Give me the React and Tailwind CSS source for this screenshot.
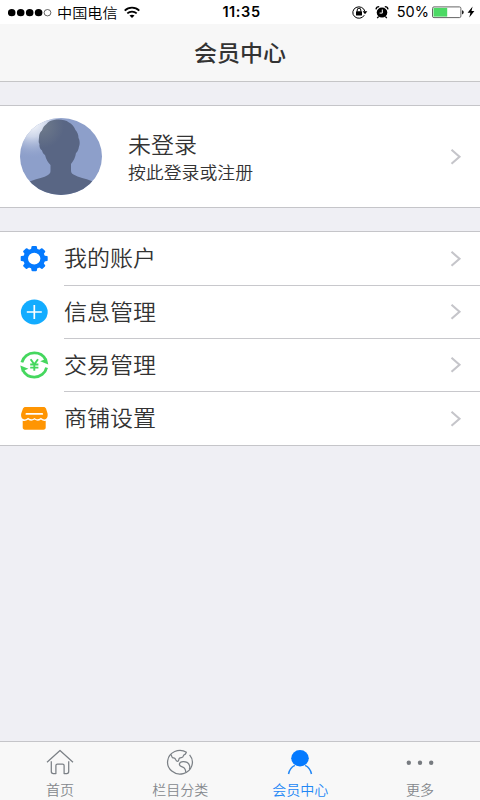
import React from 'react'

const Label = ({ children, className = '' }) => (
  <span className={`inline-block whitespace-nowrap scale-x-[1.07] ${className}`}>{children}</span>
)

const WifiIcon = () => (
  <svg width="16" height="13" viewBox="0 0 16 13" fill="none" stroke="#000" strokeWidth="1.8">
    <path d="M.7 4.6C4.8.7 11.2.7 15.3 4.6" />
    <path d="M3.3 7.4c2.7-2.5 6.7-2.5 9.4 0" />
    <path d="M8 12 5.5 9.6c1.4-1.3 3.6-1.3 5 0z" fill="#000" stroke="none" />
  </svg>
)

const LockIcon = () => (
  <svg width="16" height="14" viewBox="0 0 16 14" fill="none" stroke="#000">
    <path d="M12.3 10.2A6.1 5.7 0 1 1 12.9 6.5" strokeWidth="1" />
    <path d="M10.6 6.3h4.7L13 9.2z" fill="#000" stroke="none" />
    <rect x="4" y="6.3" width="6" height="4.2" rx=".5" fill="#000" stroke="none" />
    <path d="M5.2 6.6V5a1.8 1.8 0 0 1 3.6 0v1.6" strokeWidth="1" />
  </svg>
)

const AlarmIcon = () => (
  <svg width="14" height="13" viewBox="0 0 14 13" fill="none" stroke="#000">
    <ellipse cx="7" cy="6.6" rx="5.3" ry="5" fill="#000" stroke="none" />
    <path d="M1 3.3C1.2 1.8 2.5.7 4.2.7M13 3.3C12.8 1.8 11.5.7 9.8.7" strokeWidth="1.3" />
    <path d="m3.6 10.5-1.4 1.6M10.4 10.5l1.4 1.6" strokeWidth="1.2" />
    <path d="M7.3 3.5v3.6H4.6" stroke="#fff" strokeWidth="1" />
  </svg>
)

const BatteryIcon = () => (
  <svg width="33" height="13" viewBox="0 0 33 13">
    <rect x=".5" y=".9" width="28.4" height="10.7" rx="1.5" fill="#fff" stroke="#555" strokeWidth=".9" />
    <rect x="1.5" y="1.9" width="13.7" height="8.7" fill="#4cd964" />
    <path d="M30 4.3c2.3.4 2.3 3.7 0 4.1z" fill="#222" />
  </svg>
)

const BoltIcon = () => (
  <svg width="8" height="12" viewBox="0 0 8 12">
    <path d="M5.6.6.6 6.7h2.8L2.3 11.4l5.1-6.3H4.5z" fill="#000" />
  </svg>
)

const Avatar = () => (
  <svg width="82" height="77" viewBox="0 0 82 77">
    <defs>
      <clipPath id="avatar-clip"><ellipse cx="41" cy="38.5" rx="41" ry="38.5" /></clipPath>
      <radialGradient id="avatar-shine" gradientUnits="userSpaceOnUse" cx="12" cy="4" r="37">
        <stop offset="0" stopColor="#fff" />
        <stop offset=".4" stopColor="#dfe5f2" stopOpacity=".8" />
        <stop offset="1" stopColor="#8d9fca" stopOpacity="0" />
      </radialGradient>
      <radialGradient id="avatar-hair" gradientUnits="userSpaceOnUse" cx="22" cy="8" r="22">
        <stop offset="0" stopColor="#6f7b8b" />
        <stop offset="1" stopColor="#596684" />
      </radialGradient>
    </defs>
    <g clipPath="url(#avatar-clip)">
      <rect width="82" height="77" fill="#8d9fca" />
      <rect width="82" height="77" fill="url(#avatar-shine)" />
      <path
        d="M0 68C4 65.5 7 64 11 63c7-2.500 13-3.500 17-6 2.500-1.500 2.500-3 2.500-5v-5c-2.500-2.500-4.500-5.500-5.500-10-1.500-1-2.500-2.500-3-4.500-2-1-3-4-2.500-6.500C18 24 19 22 19 19.500c0-3.500 1.500-6 3-7C23 9 24.500 7.500 26.500 6 28 3.500 31 2.500 34 2c5-1 11-.5 15 2.500 3 1.500 5 4 6.500 7.500 2 2 3 5 3 8 1.500 2.500 1.500 6.500.5 8.500-.5 3-1.500 5.500-3 6.500-.5 4-2.500 8-5 11v6c0 2 .5 3.500 2.500 4.500 5 3 12 4 18 6.500 4 1.500 7 3 10.500 5.500v9H0z"
        fill="url(#avatar-hair)"
      />
    </g>
  </svg>
)

const Chevron = () => (
  <svg className="shrink-0" width="12" height="16" viewBox="0 0 12 16" fill="none" stroke="#c5c5ca" strokeWidth="2.1">
    <path d="m1.5.8 8 7-8 7" />
  </svg>
)

const GearIcon = () => (
  <svg width="28" height="26" viewBox="0 0 28 26">
    <g transform="translate(14.2 12.6) scale(1.07 1)" fill="#047aff">
      {[0, 45, 90, 135, 180, 225, 270, 315].map((angle) => (
        <path key={angle} transform={`rotate(${angle})`} d="M-3.2-8-2.5-12Q-2.3-12.6-1.6-12.6H1.6Q2.3-12.6 2.5-12L3.2-8z" />
      ))}
      <circle r="8" fill="none" stroke="#047aff" strokeWidth="4.4" />
    </g>
  </svg>
)

const PlusIcon = () => (
  <svg width="28" height="26" viewBox="0 0 28 26">
    <ellipse cx="14.3" cy="13" rx="13.4" ry="12.5" fill="#13acff" />
    <path d="M14.3 5.9v14.2M6.8 13h15" stroke="#fff" strokeWidth="1.7" />
  </svg>
)

const TradeIcon = () => (
  <svg width="30" height="28" viewBox="0 0 30 28" fill="none" stroke="#45d75e">
    <path d="M2.9 11.4C4.2 5.9 9.2 1.9 15.3 1.9c5 0 9.3 2.7 11.3 6.7M27.6 16.6c-1.3 5.5-6.3 9.5-12.3 9.5-5 0-9.3-2.7-11.3-6.7" strokeWidth="2.8" />
    <path d="M27.9 7.6 29.3 13.6 21.2 10.3zM2.7 20.4 1.3 14.4l8.1 3.3z" fill="#45d75e" stroke="none" />
    <path d="m11.600 8.300 3.700 5.100 3.700-5.100M15.300 13v6.800M11.200 13.500h8.200M11.200 16.600h8.200" strokeWidth="1.9" />
  </svg>
)

const ShopIcon = () => (
  <svg width="28" height="24" viewBox="0 0 28 24">
    <g transform="translate(.5 .4)">
      <path d="M5.2.5h17.600c1.500 0 2.200.6 2.700 1.700l1.500 4.700c.6 3.400-.4 5.900-3 6.100-1.900 0-2.700-.9-3.600-1.600-1.600 1.800-4.700 1.900-6.400.1-1.700 1.800-4.800 1.700-6.400-.1-.9.700-1.700 1.600-3.600 1.600C1.200 12.800 0 10.300.8 6.900l1.700-4.700C3 1.100 3.700.5 5.200.5z" fill="#ff9502" />
      <path d="M2.200 14.300c2.200.5 4-.1 5.400-1.300 1.800 1.600 4.500 1.600 6.400.2 1.900 1.400 4.600 1.400 6.400-.2 1.400 1.200 3 1.800 4.800 1.300v6.900c0 1.300-.9 2.100-2.200 2.100H4.400c-1.300 0-2.200-.8-2.200-2.100z" fill="#ff9502" />
      <path d="M5.900 7.500h15.800" stroke="#fff" strokeWidth="1.8" strokeLinecap="round" />
    </g>
  </svg>
)

const HomeIcon = () => (
  <svg width="28" height="26" viewBox="0 0 28 26" fill="none" stroke="#7b8086" strokeWidth="1.25" strokeLinejoin="round">
    <path d="M1 13.3 14 1.5l13 11.8" />
    <path d="M5.3 12.2v10.3c0 1.2.8 2 2 2h2.6v-8c0-.9.6-1.5 1.500-1.500h5.200c.9 0 1.500.6 1.500 1.500v8h2.600c1.200 0 2-.8 2-2V12.200" />
  </svg>
)

const GlobeIcon = () => (
  <svg width="28" height="26" viewBox="0 0 28 26" fill="none" stroke="#7b8086" strokeWidth="1.25" strokeLinejoin="round">
    <path d="M20.5 3.2A12.4 11.8 0 1 0 23.6 5.8" />
    <path d="M4.5 5.4c1.700 1 .9 3 2.300 3.400 1.200.3 2 .1 2.600 1.300.5 1.300 1.600 2.400 2.600 2.100 1-.5.5-2.300 1.600-3.100 1.500-.7 3.600-.3 3.600-1.800 0-1.300.9-1.700 2.100-2.200l1.200-1.900" />
    <path d="M19.8 23.2c-.2-2.100-1.200-4.500-3-5.100-2.500-.7-3.600-1.700-3.400-3.100.3-1.700 2.300-2.500 4.200-2.400 3.100.1 5.400 1.700 6 4.300.3 1.200.3 2.300-.3 3.200" />
  </svg>
)

const UserIcon = () => (
  <svg width="28" height="26" viewBox="0 0 28 26">
    <ellipse cx="14" cy="9.3" rx="8.8" ry="8.2" fill="#047aff" />
    <path d="M2.5 25c.8-4 3-7 6.400-8.600M25.500 25c-.8-4-3-7-6.400-8.600" fill="none" stroke="#2287f5" strokeWidth="1.5" />
  </svg>
)

const MoreIcon = () => (
  <svg width="28" height="26" viewBox="0 0 28 26" fill="#777b80">
    <circle cx="2.8" cy="13.8" r="2.2" />
    <circle cx="14" cy="13.8" r="2.2" />
    <circle cx="25.2" cy="13.8" r="2.2" />
  </svg>
)

const menu = [
  { title: '我的账户', icon: GearIcon },
  { title: '信息管理', icon: PlusIcon },
  { title: '交易管理', icon: TradeIcon },
  { title: '商铺设置', icon: ShopIcon },
]

const tabs = [
  { title: '首页', icon: HomeIcon },
  { title: '栏目分类', icon: GlobeIcon },
  { title: '会员中心', icon: UserIcon, active: true },
  { title: '更多', icon: MoreIcon },
]

const StatusBar = () => (
  <div className="grid h-6 shrink-0 grid-cols-[1fr_auto_1fr] items-center bg-white pr-[5px] pl-2 text-black">
    <div className="flex items-center">
      <svg width="44" height="9" viewBox="0 0 44 9">
        {[3.7, 12.7, 21.7, 30.6].map((cx) => (
          <ellipse key={cx} cx={cx} cy="4.7" rx="3.8" ry="3.6" />
        ))}
        <ellipse cx="39.5" cy="4.7" rx="3.4" ry="3.2" fill="none" stroke="#222" strokeWidth=".7" />
      </svg>
      <Label className="ml-[5px] origin-left pt-0.5 text-[14.2px] leading-[22px] font-[350]">中国电信</Label>
      <div className="ml-[10px]"><WifiIcon /></div>
    </div>
    <span className="font-[Inter] text-[14.5px] leading-6 font-semibold tracking-[0.6px]">11:35</span>
    <div className="flex items-center justify-end">
      <LockIcon />
      <div className="ml-[7px]"><AlarmIcon /></div>
      <span className="ml-2 font-[Inter] text-[14.5px] leading-6">50%</span>
      <div className="ml-[3px]"><BatteryIcon /></div>
      <div className="ml-[2px]"><BoltIcon /></div>
    </div>
  </div>
)

export default function App() {
  return (
    <div className="flex h-[800px] w-[480px] flex-col overflow-hidden bg-[#efeff4] font-['Liberation_Sans','Noto_Sans_CJK_SC',sans-serif] text-[#333]">
      <StatusBar />

      <header className="flex h-[58px] shrink-0 items-center justify-center border-b border-[#c5c5c7] bg-[#f7f7f7]">
        <Label className="pt-[3px] text-[21.5px] font-medium">会员中心</Label>
      </header>

      {/* Profile */}
      <section className="mt-[23px] flex h-[103px] shrink-0 items-center border-y border-[#c5c5c9] bg-white pr-[18px] pl-5">
        <Avatar />
        <div className="ml-[26px] flex flex-1 flex-col items-start pt-[5px]">
          <Label className="origin-left text-[21.5px] leading-[29px] font-[350]">未登录</Label>
          <Label className="origin-left text-[16.7px] leading-[26px] font-[350]">按此登录或注册</Label>
        </div>
        <Chevron />
      </section>

      {/* Menu */}
      <section className="mt-[23px] shrink-0 border-y border-[#c5c5c9] bg-white pl-5">
        {menu.map(({ title, icon: Icon }, index) => (
          <div key={title} className="flex h-[53px] last:h-[54px]">
            <div className="flex w-11 items-center">
              <div className="flex w-7 justify-center *:shrink-0"><Icon /></div>
            </div>
            <div className={`flex flex-1 items-center justify-between pr-[18px] ${index > 0 ? 'border-t border-[#c8c8cc]' : ''}`}>
              <Label className="origin-left pt-px text-[21.5px] leading-[30px] font-[350]">{title}</Label>
              <Chevron />
            </div>
          </div>
        ))}
      </section>

      <nav className="mt-auto grid h-[59px] shrink-0 grid-cols-4 border-t border-[#c5c5c9] bg-[#f8f8f8]">
        {tabs.map(({ title, icon: Icon, active }) => (
          <div key={title} className={`flex flex-col items-center pt-[7px] ${active ? 'text-[#2287f5]' : 'text-[#85888d]'}`}>
            <Icon />
            <Label className="mt-1.5 text-[13.1px] leading-5 font-[350]">{title}</Label>
          </div>
        ))}
      </nav>
    </div>
  )
}
